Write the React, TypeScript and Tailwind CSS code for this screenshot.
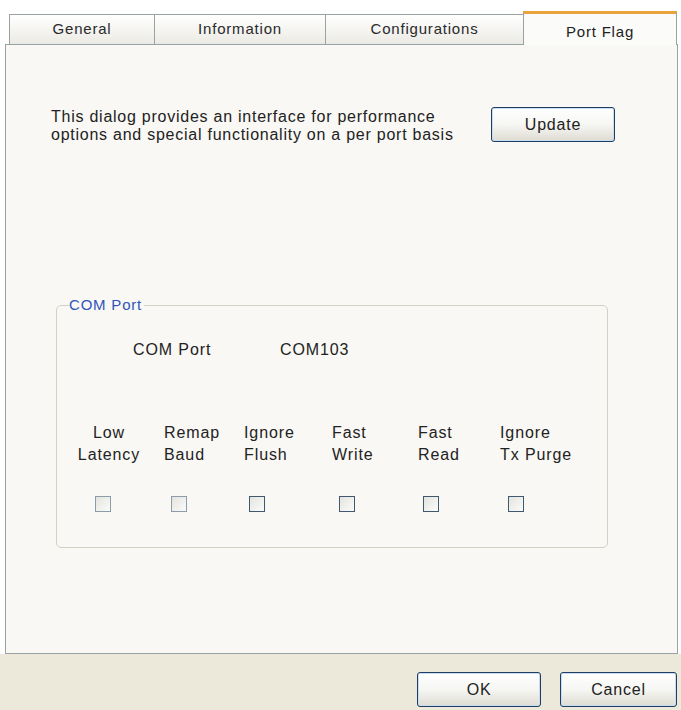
import React from 'react';

const tabs = [
  { label: 'General', w: 'w-[146px]' },
  { label: 'Information', w: 'w-[172px]' },
  { label: 'Configurations', w: 'w-[199px]' },
];

const flags = [
  { l1: 'Low', l2: 'Latency', col: 'w-[87px]', label: 'text-center w-[64px]', box: 'ml-[18px]', dim: true },
  { l1: 'Remap', l2: 'Baud', col: 'w-[80px]', label: 'text-left', box: 'ml-[7px]', dim: true },
  { l1: 'Ignore', l2: 'Flush', col: 'w-[88px]', label: 'text-left', box: 'ml-[5px]', dim: false },
  { l1: 'Fast', l2: 'Write', col: 'w-[86px]', label: 'text-left', box: 'ml-[7px]', dim: false },
  { l1: 'Fast', l2: 'Read', col: 'w-[82px]', label: 'text-left', box: 'ml-[5px]', dim: false },
  { l1: 'Ignore', l2: 'Tx Purge', col: 'w-[90px]', label: 'text-left', box: 'ml-[8px]', dim: false },
];

const XpButton = ({ children, className }: { children: React.ReactNode; className: string }) => (
  <button
    className={`${className} h-[35px] rounded-[3px] border border-[#1e3f63] bg-gradient-to-b from-white via-[#f6f6f3] to-[#dedcd2] shadow-[inset_0_0_0_1px_#c9dcf2] text-[16px] tracking-[0.8px] text-[#222]`}
  >
    {children}
  </button>
);

const App = () => {
  return (
    <div className="w-[681px] h-[710px] flex flex-col bg-white font-['Liberation_Sans',Arial,sans-serif] text-[#222]">
      {/* Tab strip */}
      <div className="h-[44px] flex items-end pl-[9px] shrink-0">
        {tabs.map((t) => (
          <div
            key={t.label}
            className={`${t.w} h-[30px] -mr-px flex items-center justify-center border border-b-0 border-[#9aa3a4] bg-gradient-to-b from-white to-[#ebeae4] text-[15px] tracking-[0.8px] text-[#2a2a2a]`}
          >
            {t.label}
          </div>
        ))}
        <div className="relative z-10 w-[154px] h-[34px] -mb-px flex justify-center pt-[7px] border-x border-[#9aa3a4] border-t-[3px] border-t-[#e8a33c] bg-[#fbfbf9] text-[15px] tracking-[0.8px]">
          Port Flag
        </div>
      </div>

      {/* Panel */}
      <div className="flex-1 ml-[5px] mr-[3px] border border-[#9aa3a4] bg-[#f9f8f5] pl-[45px] pt-[63px]">
        <div className="flex items-start">
          <p className="w-[420px] whitespace-nowrap text-[16px] leading-[18px] tracking-[0.75px]">
            This dialog provides an interface for performance
            <br />
            options and special functionality on a per port basis
          </p>
          <div className="ml-[20px] -mt-px">
            <XpButton className="w-[124px]">Update</XpButton>
          </div>
        </div>

        {/* COM Port group */}
        <div className="relative ml-[5px] mt-[161px] w-[552px] h-[243px] rounded-[5px] border border-[#d3d2c6] pl-[76px] pt-[35px]">
          <span className="absolute left-[12px] -top-[10px] bg-[#f9f8f5] pr-[2px] text-[15px] leading-[18px] tracking-[0.8px] text-[#2f55b8]">
            COM Port
          </span>
          <div className="flex text-[16px] leading-[18px] tracking-[0.9px]">
            <span className="w-[147px]">COM Port</span>
            <span>COM103</span>
          </div>

          <div className="flex -ml-[56px] mt-[63px]">
            {flags.map((f, i) => (
              <div key={i} className={`${f.col} flex flex-col`}>
                <div className={`${f.label} text-[16px] leading-[22px] tracking-[0.9px]`}>
                  {f.l1}
                  <br />
                  {f.l2}
                </div>
                <div
                  className={`${f.box} mt-[30px] w-[16px] h-[16px] border ${
                    f.dim ? 'border-[#8d9caa]' : 'border-[#3f5a70]'
                  } bg-gradient-to-br from-[#e3e3de] to-[#fbfbfa]`}
                />
              </div>
            ))}
          </div>
        </div>
      </div>

      {/* Footer */}
      <div className="h-[56px] shrink-0 bg-[#ece9da] flex justify-end items-start pt-[18px] pr-[4px] gap-[19px]">
        <XpButton className="w-[124px]">OK</XpButton>
        <XpButton className="w-[117px]">Cancel</XpButton>
      </div>
    </div>
  );
};

export default App;
